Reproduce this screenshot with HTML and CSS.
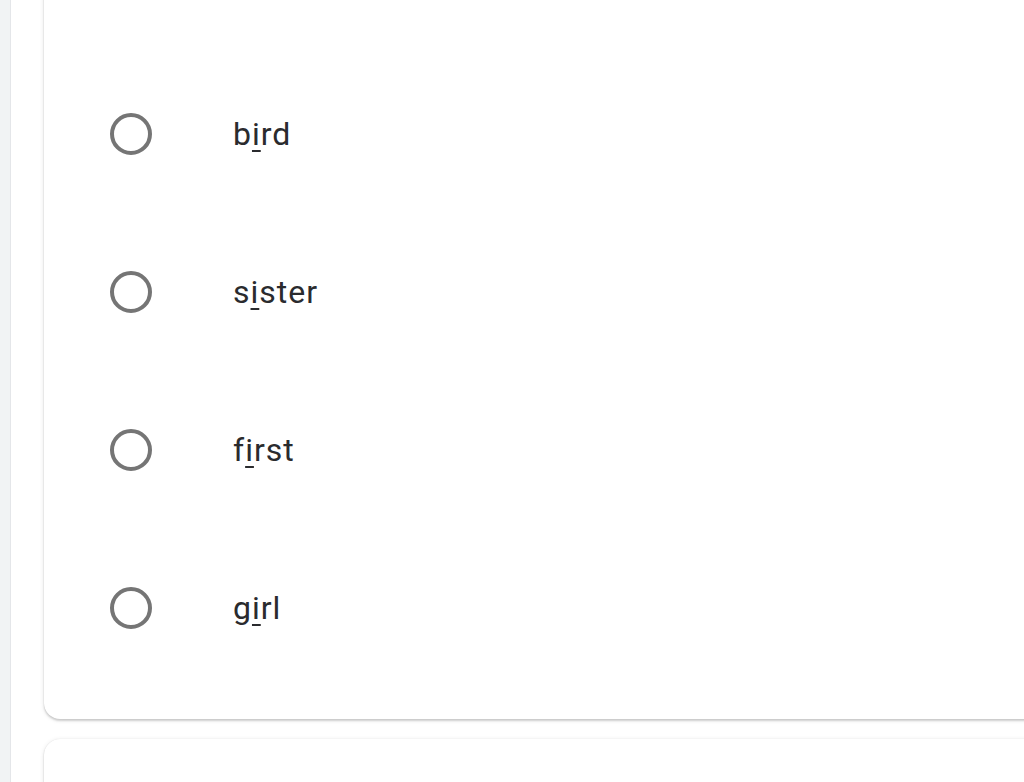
FILE: index.html
```html
<!DOCTYPE html>
<html>
<head>
<meta charset="utf-8">
<link rel="stylesheet" href="styles.css">
</head>
<body>
<div class="page">
  <div class="rail"></div>
  <div class="main">
    <div class="card">
      <div class="option"><span class="radio"></span><span class="label">b<u>i</u>rd</span></div>
      <div class="option"><span class="radio"></span><span class="label">s<u>i</u>ster</span></div>
      <div class="option"><span class="radio"></span><span class="label">f<u>i</u>rst</span></div>
      <div class="option"><span class="radio"></span><span class="label">g<u>i</u>rl</span></div>
    </div>
    <div class="card next"></div>
  </div>
</div>
</body>
</html>
```
FILE: styles.css
```css
html, body {
  margin: 0;
  padding: 0;
  background: #ffffff;
  font-family: Roboto, "Noto Sans", sans-serif;
  overflow: hidden;
}
.page {
  display: flex;
  width: 1024px;
  height: 782px;
  overflow: hidden;
}
.rail {
  width: 10px;
  flex: none;
  background: #f1f3f4;
  border-right: 1px solid #e4e6e9;
}
.main {
  flex: 1;
  padding-left: 33px;
  display: flex;
  flex-direction: column;
  gap: 20px;
  min-height: 0;
}
.card {
  background: #fff;
  border-radius: 16px;
  box-shadow: 0 2px 2px rgba(0,0,0,0.14), 0 1px 5px rgba(0,0,0,0.10), 0 0 1px rgba(0,0,0,0.12);
  margin-top: -30px;
  margin-right: -40px;
  padding: 85px 0 32px 66px;
  display: flex;
  flex-direction: column;
  flex: none;
}
.card.next {
  margin-top: 0;
  height: 90px;
  padding: 0;
}
.option {
  height: 158px;
  display: flex;
  align-items: center;
}
.radio {
  width: 34px;
  height: 34px;
  border: 4px solid #757575;
  border-radius: 50%;
  flex: none;
}
.label {
  margin-left: 81px;
  font-size: 32px;
  color: #2a2b2e;
  letter-spacing: 1px;
}
.label u {
  text-decoration-thickness: 2px;
  text-underline-offset: 5px;
}
```
